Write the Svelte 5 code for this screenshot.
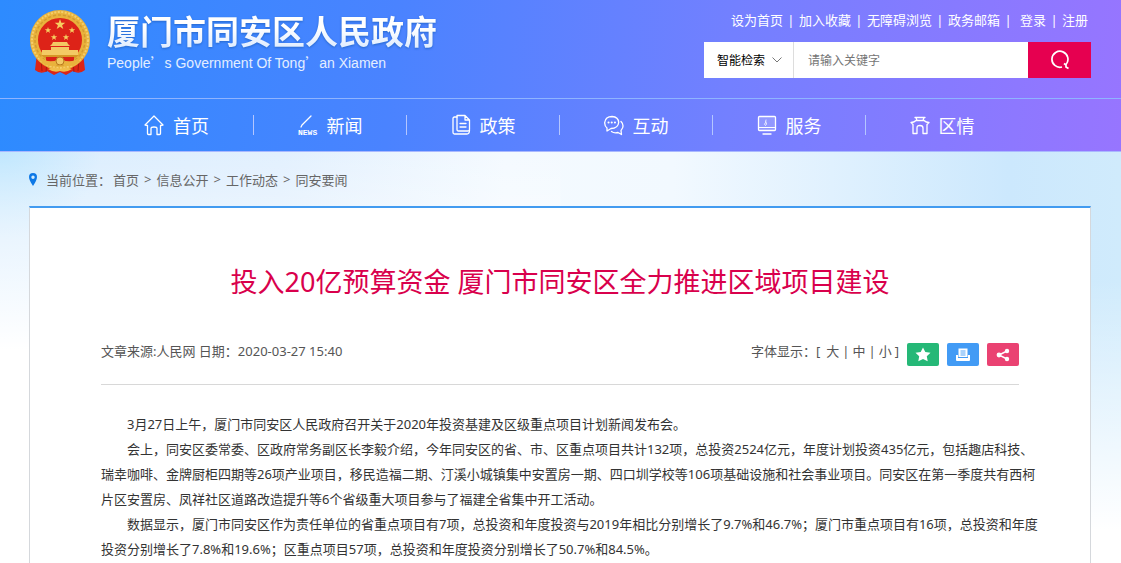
<script>
  let keyword = $state('');
  let searchType = $state('智能检索');

  const topLinks = ['设为首页', '加入收藏', '无障碍浏览', '政务邮箱'];
  const userLinks = ['登录', '注册'];

  const navItems = [
    { name: '首页', icon: 'home' },
    { name: '新闻', icon: 'news' },
    { name: '政策', icon: 'policy' },
    { name: '互动', icon: 'chat' },
    { name: '服务', icon: 'service' },
    { name: '区情', icon: 'district' }
  ];

  const crumbs = ['首页', '信息公开', '工作动态', '同安要闻'];
  const fontSizes = ['大', '中', '小'];

  const paragraphs = [
    '3月27日上午，厦门市同安区人民政府召开关于2020年投资基建及区级重点项目计划新闻发布会。',
    '会上，同安区委常委、区政府常务副区长李毅介绍，今年同安区的省、市、区重点项目共计132项，总投资2524亿元，年度计划投资435亿元，包括趣店科技、瑞幸咖啡、金牌厨柜四期等26项产业项目，移民造福二期、汀溪小城镇集中安置房一期、四口圳学校等106项基础设施和社会事业项目。同安区在第一季度共有西柯片区安置房、凤祥社区道路改造提升等6个省级重大项目参与了福建全省集中开工活动。',
    '数据显示，厦门市同安区作为责任单位的省重点项目有7项，总投资和年度投资与2019年相比分别增长了9.7%和46.7%；厦门市重点项目有16项，总投资和年度投资分别增长了7.8%和19.6%；区重点项目57项，总投资和年度投资分别增长了50.7%和84.5%。'
  ];
</script>

<div class="page">
  <header>
    <div class="banner">
      <a class="brand" href="#home">
        <svg class="emblem" viewBox="0 0 62 66" aria-hidden="true">
          <path d="M8 43 L6 60 Q12 65 18 61 L25 65 L31 62 L37 65 L44 61 Q50 65 56 60 L54 43 Z" fill="#dc2416" />
          <path d="M12 49 L13 61 M18 51 L17 62 M50 49 L49 61 M44 51 L45 62" stroke="#a9190f" stroke-width="1" />
          <circle cx="31" cy="30" r="26" fill="#dd2318" stroke="#e9b23c" stroke-width="8" />
          <circle cx="31" cy="30" r="28" fill="none" stroke="#f5cf6c" stroke-width="2" stroke-dasharray="2 1.5" />
          <circle cx="31" cy="30" r="25" fill="none" stroke="#d39a30" stroke-width="1.5" stroke-dasharray="3 2" />
          <path d="M31 9 l1.3 3.8 h4 l-3.2 2.4 1.2 3.9 -3.3-2.4 -3.3 2.4 1.2-3.9 -3.2-2.4 h4z" fill="#f6cf60" />
          <path id="star" d="M19 17 l.8 2.3 h2.4 l-1.9 1.4 .7 2.3 -2-1.4 -2 1.4 .7-2.3 -1.9-1.4 h2.4z" fill="#f6cf60" />
          <use href="#star" x="24" />
          <use href="#star" x="6" y="7" />
          <use href="#star" x="18" y="7" />
          <path d="M23 34 L24 32 H38 L39 34 L41 36 H21 Z M22 37 H40 V40 H49 V45 H13 V40 H22 Z" fill="#f3c964" />
          <path d="M12 45 H50 L45 49 H17 Z" fill="#d69526" />
          <path d="M17 47 H45 V53 H17 Z" fill="#d92116" />
          <path d="M9 45 Q20 56 31 48 Q42 56 53 45 Q50 55 42 56 Q35 56 31 53 Q27 56 20 56 Q12 55 9 45 Z" fill="#e9b23c" />
          <circle cx="31" cy="51" r="4" fill="#f3c964" stroke="#b97a1c" stroke-width="1" />
          <path d="M19 59 Q25 56 31 59 Q37 56 43 59 Q37 63 31 61 Q25 63 19 59Z" fill="#f0bd4a" />
        </svg>
        <span class="names">
          <strong>厦门市同安区人民政府</strong>
          <span class="english">People<span>’</span>s Government Of Tong<span>’</span>an Xiamen</span>
        </span>
      </a>

      <div class="tools">
        <div class="top-links">
          {#each topLinks as link}
            <a href="#top">{link}</a><i>|</i>
          {/each}
          <a class="login" href="#user">{userLinks[0]}</a><i>|</i>
          <a href="#user">{userLinks[1]}</a>
        </div>
        <form class="search" onsubmit={(e) => e.preventDefault()}>
          <label class="type">
            <select bind:value={searchType} aria-label="检索方式">
              <option>智能检索</option>
            </select>
            <svg width="10" height="6" viewBox="0 0 10 6"><path d="M0.5 0.5 L5 5 L9.5 0.5" fill="none" stroke="#777" /></svg>
          </label>
          <input type="text" bind:value={keyword} placeholder="请输入关键字" aria-label="关键字" />
          <button aria-label="搜索">
            <svg width="20" height="20" viewBox="0 0 20 20" fill="none" stroke="#fff" stroke-width="1.7">
              <path d="M12 17 A8 8 0 1 1 16 14.5 M14 13.5 L16 15 L16 17 L18.5 18.5" />
            </svg>
          </button>
        </form>
      </div>
    </div>

    <nav>
      <ul>
        {#each navItems as item}
          <li>
            <a href="#{item.icon}">
              <svg width="20" height="22" viewBox="0 0 20 22" fill="none" stroke="#fff" stroke-width="1.3" stroke-linejoin="round" stroke-linecap="round">
                {#if item.icon === 'home'}
                  <path d="M1 11 L10 2 L19 11 L16.5 11.5 V19.5 Q16.5 20.5 15.5 20.5 H13 V14.5 Q13 13 10 13 Q7 13 7 14.5 V20.5 H4.5 Q3.5 20.5 3.5 19.5 V11.5 Z" />
                {:else if item.icon === 'news'}
                  <path d="M13 2 L4 11 L3 13" />
                  <text x="0" y="21">NEWS</text>
                {:else if item.icon === 'policy'}
                  <path d="M6 1.5 H14 L18.5 6 V15.5 Q18.5 17 17 17 H7.5 Q6 17 6 15.5 Z M14 1.5 V6 H18.5 M9 9.5 H15 M9 13 H15" />
                  <path d="M6 3 H3.5 Q2 3 2 4.5 V18.5 Q2 20 3.5 20 H16 Q18.5 20 18.5 16" />
                {:else if item.icon === 'chat'}
                  <path d="M3 14 Q0.5 12 0.7 8.5 Q1.5 2.5 8 2.5 Q14.5 3 14.7 8.5 Q14 14.5 7 14.5 L3 17 Z" />
                  <path d="M17 7.5 Q20 10.5 18.5 14 L17 16.5 L17.5 20.5 L14 18.5 Q10 19.5 7.5 17.5" />
                  <path d="M4.5 8.5 h.1 M7.7 8.5 h.1 M10.9 8.5 h.1" stroke-width="2" />
                {:else if item.icon === 'service'}
                  <rect x="1.5" y="2.5" width="17" height="14" rx="1" fill="#fff" fill-opacity="0.2" />
                  <path d="M2 13.5 H18" stroke-width="1" />
                  <path d="M6 20 H14" />
                  <path d="M9 6 L8.5 8.5 Q6.5 10.5 8.5 11.5 Q10.5 10.5 9 8" stroke-width="0.8" />
                {:else}
                  <path d="M5 3.5 H15 M6 3.5 L7 6.5 M14 3.5 L13 6.5 M1 8.5 Q4 8.5 6 6.5 H14 Q16 8.5 19 8.5 L17 10.5 V19.5 H13 V14 Q13 11.5 10 11.5 Q7 11.5 7 14 V19.5 H3 V10.5 Z" />
                {/if}
              </svg>
              {item.name}
            </a>
          </li>
        {/each}
      </ul>
    </nav>
  </header>

  <main>
    <div class="crumbs">
      <svg width="8" height="13" viewBox="0 0 8 13"><path fill-rule="evenodd" d="M4 0 A4 4 0 0 1 8 4 Q8 7 4 13 Q0 7 0 4 A4 4 0 0 1 4 0 Z M4 2.5 A1.7 1.7 0 1 0 4 5.9 A1.7 1.7 0 1 0 4 2.5 Z" fill="#0d78e6" /></svg>
      <span class="here">当前位置：</span>
      {#each crumbs as crumb, i}
        {#if i > 0}<span class="arrow">&gt;</span>{/if}
        <a href="#crumb">{crumb}</a>
      {/each}
    </div>

    <article>
      <h1>投入20亿预算资金 厦门市同安区全力推进区域项目建设</h1>

      <div class="meta">
        <span>文章来源:人民网 日期：2020-03-27 15:40</span>
        <div class="actions">
          <div class="sizes">
            <span>字体显示：[</span>
            {#each fontSizes as size, i}
              {#if i > 0}<span>|</span>{/if}
              <button>{size}</button>
            {/each}
            <span>]</span>
          </div>
          <button class="action save" aria-label="收藏">
            <svg width="16" height="15" viewBox="0 0 16 15"><path d="M8 0.5 L10.3 5 L15.5 5.7 L11.8 9.3 L12.7 14.3 L8 12 L3.3 14.3 L4.2 9.3 L0.5 5.7 L5.7 5 Z" fill="#fff" /></svg>
          </button>
          <button class="action print" aria-label="打印">
            <svg width="16" height="14" viewBox="0 0 16 14">
              <path d="M1 7 H3 V10 H13 V7 H15 V12 Q15 13 14 13 H2 Q1 13 1 12 Z M3.5 0.5 H12.5 V9 H3.5 Z" fill="#fff" />
              <path d="M5.5 3 H10.5 M5.5 5 H10.5 M5.5 7 H10.5" stroke="#429bf5" stroke-width="0.9" />
            </svg>
          </button>
          <button class="action share" aria-label="分享">
            <svg width="14" height="14" viewBox="0 0 14 14" fill="#fff">
              <path d="M11 3 L3 7 L11 11" fill="none" stroke="#fff" stroke-width="1.5" />
              <circle cx="11" cy="3" r="2.2" /><circle cx="3" cy="7" r="2.4" /><circle cx="11" cy="11" r="2.2" />
            </svg>
          </button>
        </div>
      </div>

      <div class="text">
        {#each paragraphs as paragraph}
          <p>{paragraph}</p>
        {/each}
      </div>
    </article>
  </main>
</div>

<style>
  :global(body) {
    background: #fff;
  }

  .page {
    height: 100vh;
    overflow: hidden;
    font-family: "Noto Sans", "Noto Sans CJK SC", sans-serif;
    font-size: 13px;
    color: #555;
    background:
      linear-gradient(transparent 150px, #fff 350px) left / 50% 100% no-repeat,
      linear-gradient(transparent 280px, #fff 530px) right / 50% 100% no-repeat,
      radial-gradient(ellipse 100px 90px at 0 150px, #bfe7fe, transparent),
      linear-gradient(90deg, #d9edfe, #e2f0fe 25%, #f4faff 45%, #f2f9ff 60%, #cce8fd 90%, #d0ebfc);
  }

  a {
    color: inherit;
    text-decoration: none;
  }

  button {
    padding: 0;
    border: 0;
    background: none;
    font: inherit;
    color: inherit;
    cursor: pointer;
  }

  header {
    color: #fff;
    background: linear-gradient(95deg, #2d8bff, #4a83ff 35%, #7380ff 65%, #9775ff);
    border-bottom: 1px solid #a9b8ff;
  }

  .banner {
    display: flex;
    justify-content: space-between;
    height: 98px;
    padding: 0 30px 0 29px;
  }

  .brand {
    display: flex;
    gap: 16px;
    padding-top: 10px;
  }

  .emblem {
    width: 62px;
    height: 66px;
  }

  .names {
    display: flex;
    flex-direction: column;
  }

  .names strong {
    font-size: 33px;
    line-height: 44px;
    background: linear-gradient(#fff 40%, #d5e6ff);
    background-clip: text;
    color: transparent;
    filter: drop-shadow(0 1px 1px #2668cc);
  }

  .english {
    font-family: "Liberation Sans", sans-serif;
    font-size: 14px;
    line-height: 16px;
    color: #e3eeff;
  }

  .english span {
    font-family: "Noto Sans CJK SC", sans-serif;
  }

  .tools {
    width: 387px;
  }

  .top-links {
    display: flex;
    justify-content: flex-end;
    height: 42px;
    padding-right: 3px;
    line-height: 40px;
  }

  .top-links i {
    width: 16px;
    font-style: normal;
    text-align: center;
  }

  .login {
    padding-left: 4px;
  }

  .search {
    display: flex;
    height: 36px;
    background: #fff;
    font-size: 12px;
  }

  .type {
    display: flex;
    align-items: center;
    box-sizing: border-box;
    width: 90px;
    padding: 0 11px 0 13px;
    border-right: 1px solid #ddd;
  }

  .type select {
    appearance: none;
    flex: 1;
    min-width: 0;
    padding: 0;
    border: 0;
    background: none;
    font: inherit;
    color: #000;
  }

  .search input {
    flex: 1;
    min-width: 0;
    padding: 0 14px;
    border: 0;
    outline: 0;
    font: inherit;
  }

  .search input::placeholder {
    color: #757575;
  }

  .search button {
    display: grid;
    place-items: center;
    width: 63px;
    background: #e60050;
  }

  nav {
    border-top: 1px solid #8fb4ff;
  }

  nav ul {
    display: flex;
    margin: 0;
    padding: 0 103px 0 100px;
    list-style: none;
  }

  nav li {
    flex: 1;
    display: flex;
    align-items: center;
    height: 52px;
  }

  nav li a {
    flex: 1;
    display: flex;
    justify-content: center;
    align-items: center;
    gap: 9px;
    font-size: 18px;
  }

  nav li + li::before {
    content: "";
    width: 1px;
    height: 20px;
    background: #b4c6ff;
  }

  nav text {
    font: bold 8px "Liberation Mono", monospace;
    fill: #fff;
    stroke: none;
  }

  main {
    padding: 0 30px 0 29px;
  }

  .crumbs {
    display: flex;
    align-items: center;
    height: 54px;
    color: #666;
  }

  .here {
    margin: 0 2px 0 9px;
  }

  .arrow {
    margin: 0 5px;
  }

  article {
    padding: 49px 71px 40px;
    background: #fff;
    border: 1px solid #d5d8dc;
    border-top: 2px solid #429bf0;
  }

  h1 {
    margin: 0;
    font-size: 27px;
    font-weight: 400;
    line-height: 50px;
    text-align: center;
    color: #d9004c;
  }

  .meta {
    display: flex;
    justify-content: space-between;
    height: 48px;
    padding-top: 29px;
    border-bottom: 1px solid #d8d8d8;
    line-height: 30px;
  }

  .actions {
    display: flex;
    gap: 8px;
  }

  .sizes {
    display: flex;
    gap: 3px;
    height: 30px;
  }

  .sizes span:first-child {
    margin-right: 3px;
  }

  .action {
    display: grid;
    place-items: center;
    width: 32px;
    height: 23px;
    margin-top: 7px;
    border-radius: 2px;
  }

  .save {
    background: #25b877;
  }

  .print {
    background: #429bf5;
  }

  .share {
    background: #ea4272;
  }

  /* a little wider than the heading row so full lines of text are not cut short */
  .text {
    margin: 27px -23px 0 0;
    line-height: 25px;
    color: #333;
  }

  .text p {
    margin: 0;
    text-indent: 2em;
  }
</style>
